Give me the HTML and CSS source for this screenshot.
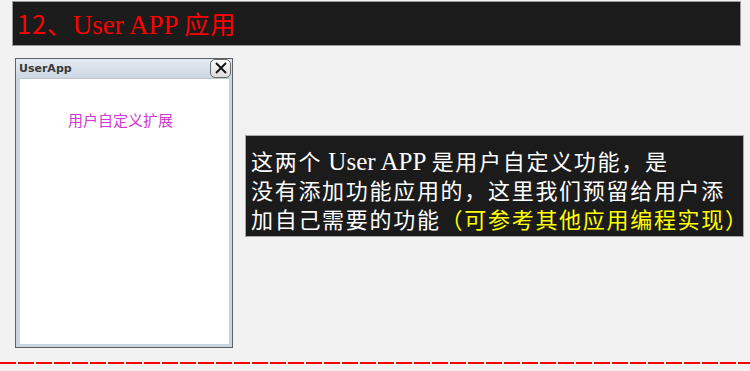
FILE: index.html
```html
<!DOCTYPE html>
<html lang="zh-CN">
<head>
    <meta charset="UTF-8">
    <title>User APP 应用</title>
    <link rel="stylesheet" href="styles.css">
</head>
<body>
    <div class="header">
        <h1>12、<span class="latin">User APP </span>应用</h1>
    </div>
    <div class="row">
        <div class="window">
            <div class="titlebar">
                <span class="wtitle">UserApp</span>
                <span class="close">
                    <svg width="14" height="14" viewBox="0 0 14 14"><path d="M2 2 L12 12 M12 2 L2 12" stroke="#111" stroke-width="1.8" fill="none"/></svg>
                </span>
            </div>
            <div class="wbody">
                <p class="ext">用户自定义扩展</p>
            </div>
        </div>
        <div class="note">
            <div class="line">这两个<span class="latin"> User APP </span>是用户自定义功能，是</div>
            <div class="line">没有添加功能应用的，这里我们预留给用户添</div>
            <div class="line">加自己需要的功能<span class="hl">（可参考其他应用编程实现）</span></div>
        </div>
    </div>
    <div class="dash"></div>
</body>
</html>
```

FILE: styles.css
```css
* { margin: 0; padding: 0; box-sizing: border-box; }
body {
    background: #f2f2f2;
    font-family: "Noto Sans CJK SC", sans-serif;
    width: 750px;
    height: 371px;
    overflow: hidden;
}
.header {
    margin: 1px 9px 0 12px;
    height: 45px;
    background: #1b1b1b;
    border: 1px solid #9a9a9a;
    display: flex;
    align-items: center;
    padding-left: 4px;
}
.header h1 {
    color: #ff0000;
    font-weight: normal;
    font-size: 25px;
    letter-spacing: 1px;
    line-height: 30px;
    white-space: pre;
}
.header .latin {
    font-family: "Liberation Serif", serif;
    font-size: 27px;
    letter-spacing: 0;
}
.row {
    display: flex;
    align-items: flex-start;
    margin-top: 12px;
    height: 289px;
}
.window {
    margin-left: 15px;
    width: 218px;
    height: 290px;
    border: 1px solid #5e6266;
    background: #c9d5e0;
    display: flex;
    flex-direction: column;
}
.titlebar {
    height: 19px;
    background: linear-gradient(#e4eaf1, #cdd8e3);
    display: flex;
    align-items: center;
    justify-content: space-between;
    padding-left: 3px;
}
.wtitle {
    font-family: "DejaVu Sans", sans-serif;
    font-weight: bold;
    font-size: 11px;
    color: #3a3a3a;
}
.close {
    width: 21px;
    height: 19px;
    margin-top: -1px;
    margin-right: 1px;
    border: 1px solid #6a6a6a;
    border-radius: 5px;
    background: linear-gradient(#fafafa, #dcdcdc);
    display: flex;
    align-items: center;
    justify-content: center;
}
.wbody {
    flex: 1;
    margin: 0 3px 3px 4px;
    background: #fff;
    border-top: 1px solid #b8c6d4;
}
.ext {
    text-align: center;
    color: #d238d2;
    font-size: 15px;
    line-height: 20px;
    margin-top: 31px;
    padding-right: 8px;
}
.note {
    margin: 77px 0 0 12px;
    width: 499px;
    height: 102px;
    background: #1b1b1b;
    border: 1px solid #a8a8a8;
    color: #ffffff;
    font-size: 22px;
    letter-spacing: 1.7px;
    padding: 10px 0 0 5px;
}
.line {
    height: 29px;
    line-height: 29px;
    white-space: pre;
}
.note .latin {
    font-family: "Liberation Serif", serif;
    font-size: 25px;
    letter-spacing: 0;
    line-height: 29px;
}
.hl { color: #ffff00; }
.dash {
    margin-top: 15px;
    height: 2px;
    background: repeating-linear-gradient(90deg, #ff0000 0, #ff0000 16px, transparent 16px, transparent 18px);
}
```
